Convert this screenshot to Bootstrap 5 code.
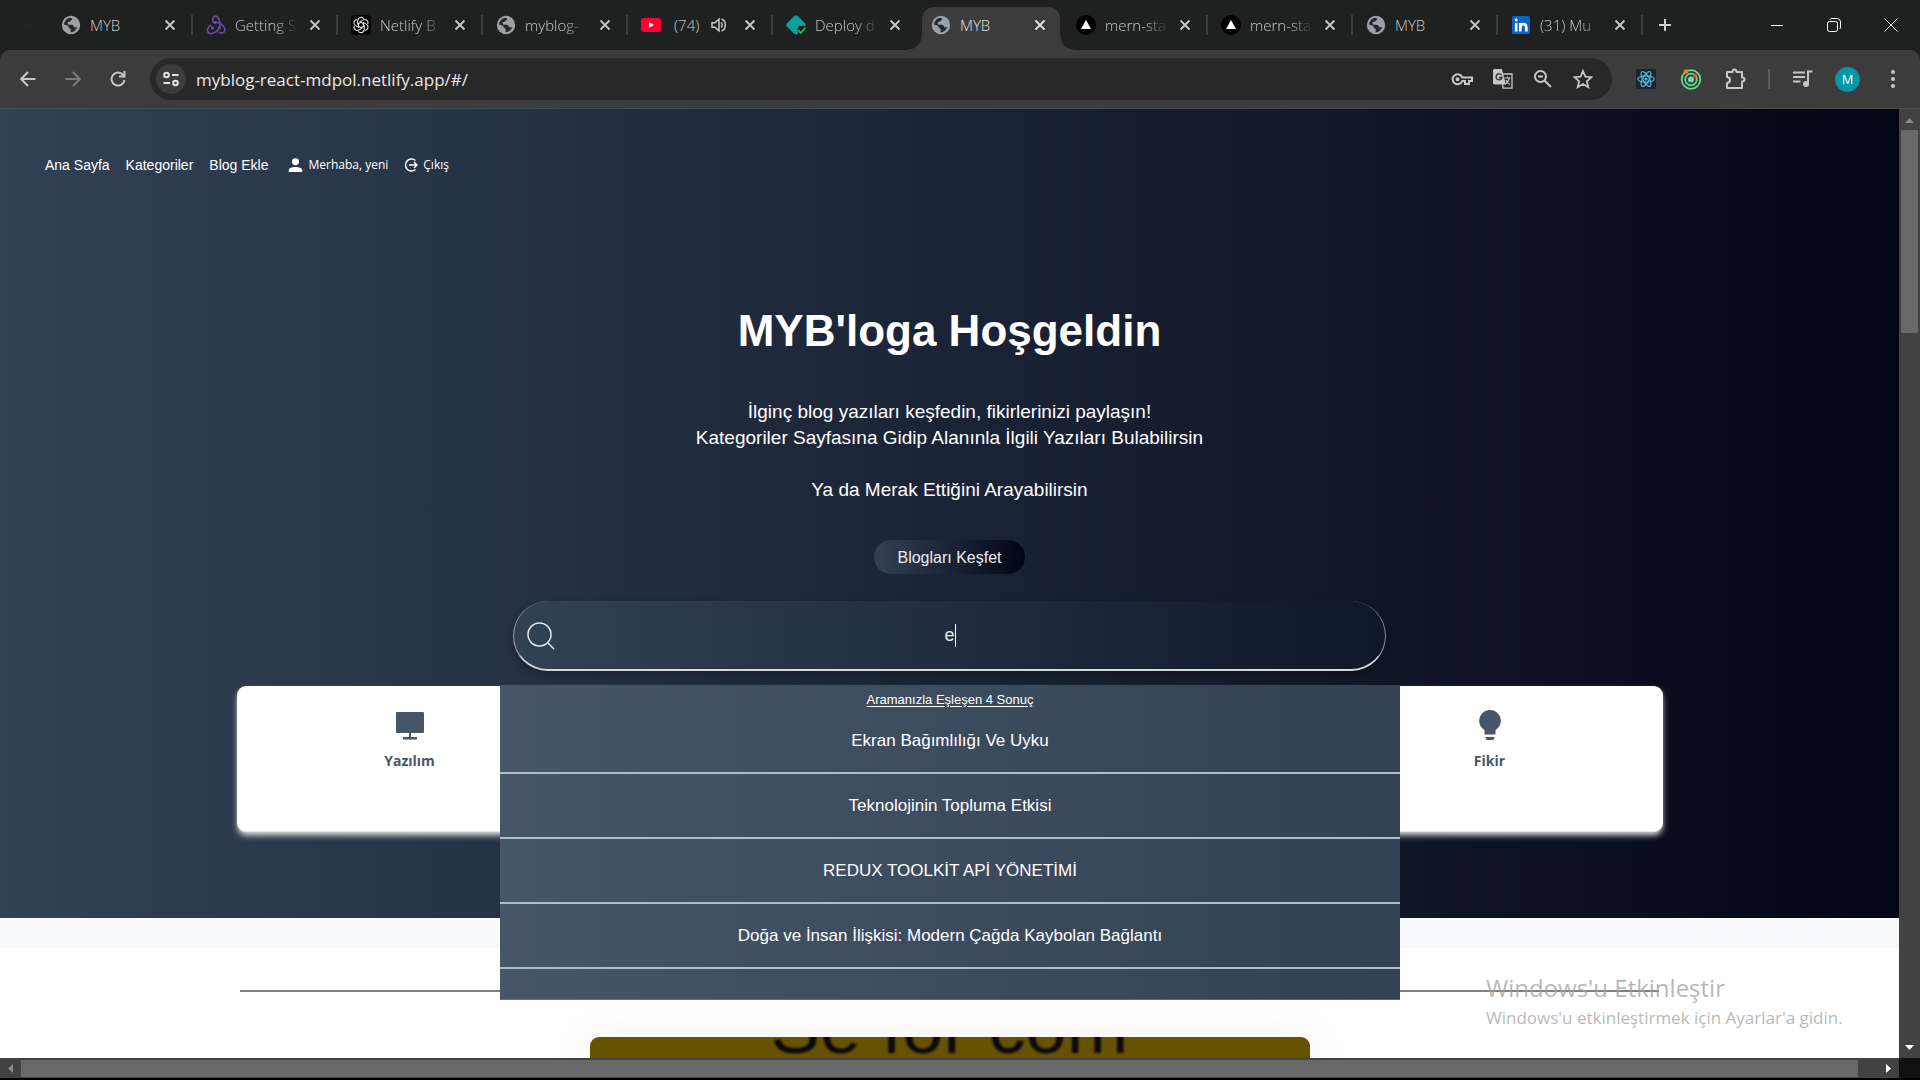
<!DOCTYPE html>
<html lang="tr">
<head>
<meta charset="utf-8">
<meta name="viewport" content="width=device-width, initial-scale=1">
<title>MYB</title>
<link href="https://cdn.jsdelivr.net/npm/bootstrap@5.3.0/dist/css/bootstrap.min.css" rel="stylesheet">
<style>
  body { font-family: "Liberation Sans", Arial, sans-serif; background: #000; }
  button { font-family: inherit; }
  .ui-font { font-family: "Open Sans", "Noto Sans", sans-serif; font-weight: 300; }
  svg { display: block; flex: none; }

  /* tab strip */
  .tab-strip { background: #1f2120; height: 50px; padding: 0 1px 0 8px; }
  .tab-search { width: 35px; height: 34px; border-radius: 12px; background: #3c3c3c; color: #e3e3e3; margin-right: 5px; }
  .plain-btn { background: none; border: 0; padding: 0; color: inherit; }
  .browser-tab { width: 145px; height: 43px; padding: 0 17px 0 13px; color: #c7c9c8; font-size: 15px; gap: 9px; }
  .browser-tab::after { content: ""; position: absolute; right: 0; top: 8px; width: 2px; height: 20px; background: #3c3e3d; }
  .browser-tab.no-line::after { display: none; }
  .browser-tab .tab-title { flex: 1 1 0; overflow: hidden; white-space: nowrap; color: inherit; text-decoration: none; line-height: 24px;
    -webkit-mask-image: linear-gradient(90deg, #000 62%, transparent 98%); mask-image: linear-gradient(90deg, #000 62%, transparent 98%); }
  .browser-tab .tab-title.whole { -webkit-mask-image: none; mask-image: none; }
  .browser-tab.current { color: #e3e3e3; }
  .tab-shape { position: absolute; left: 4px; right: 3px; top: 0; bottom: 0; background: #3c3c3c; border-radius: 12px 12px 0 0; }
  .tab-shape::before, .tab-shape::after { content: ""; position: absolute; bottom: 0; width: 14px; height: 14px; }
  .tab-shape::before { right: 100%; background: radial-gradient(circle at 0 0, transparent 13px, #3c3c3c 14px); }
  .tab-shape::after { left: 100%; background: radial-gradient(circle at 100% 0, transparent 13px, #3c3c3c 14px); }
  .window-btn { width: 57px; height: 50px; color: #fff; }

  /* toolbar */
  .tool-wrap { background: #1f2120; }
  .tool-bar { background: #3c3c3c; height: 59px; border-bottom: 1px solid #4a4b45; border-radius: 10px 10px 0 0; padding: 0 5px; color: #c7c7c7; }
  .tool-btn { width: 45px; height: 42px; }
  .address { background: #282828; height: 42px; border-radius: 21px; margin: 0 11px 0 10px; padding: 0 19px 0 6px; gap: 20px; }
  .site-info { width: 30px; height: 30px; border-radius: 50%; background: #3c3c3c; margin-right: -10px; }
  .address input { background: none; border: 0; outline: 0; color: #e8e8e8; font-size: 17px; padding: 2px 0 0; min-width: 0; }
  .tool-line { width: 2px; height: 20px; background: #5a5a5a; margin: 0 10px; }
  .avatar { width: 25px; height: 25px; border-radius: 50%; background: #0097a7; color: #fff; font-size: 13px; line-height: 25px; font-weight: 400; }

  /* page */
  .page-view { min-height: 0; background: #fff; }
  .hero { background: linear-gradient(90deg, #334155, #020617); color: #fff; padding: 46px 45px 86px; }
  .site-nav { gap: 16px; font-size: 14px; line-height: 20px; }
  .site-nav a, .site-nav .greeting { color: #fff; text-decoration: none; }
  .site-nav .account { font-family: "Open Sans", "Noto Sans", sans-serif; font-size: 12px; gap: 5px; }
  .hero-title { font-size: 44px; line-height: 50px; margin-top: 131px; }
  .hero-text { font-size: 19px; line-height: 26px; margin-top: 43px; }
  .explore { margin-top: 37px; height: 34px; width: 151px; border: 0; border-radius: 17px; padding: 1px 0 0; color: #e8ecf2; font-size: 16px; background: linear-gradient(90deg, #334155, #020617); }
  .search-area { max-width: 873px; margin-top: 27px; }
  .search-field { height: 70px; border: 1px solid #e5e7eb; border-width: 0 1px 2px; border-radius: 35px; background: linear-gradient(90deg, #334155, #0f172a) border-box; box-shadow: 0 4px 8px rgba(0,0,0,.25); color: #e5e7eb; font-size: 18px; outline: 0; border-color: rgba(229,231,235,.55) rgba(229,231,235,.55) #d5d9df; }
  .search-box { position: relative; }
  .search-box svg { position: absolute; left: 14px; top: 21px; }
  .text-cursor { position: absolute; left: calc(50% + 5px); top: 23px; width: 1px; height: 23px; background: #fff; }
  .results { position: absolute; top: 84px; left: -13px; right: -14px; height: 315px; z-index: 5; background: linear-gradient(90deg, #475569, #334155); border: 1px solid rgba(160,170,190,.35); border-width: 0 0 1px; }
  .results .found { font-size: 13px; line-height: 20px; padding-top: 5px; text-decoration: underline; text-underline-offset: 2px; }
  .results a { display: block; color: #fff; text-decoration: none; font-size: 17px; line-height: 27px; padding: 18px 0; border-bottom: 2px solid #b4bbc6; }
  .results a.first-hit { padding-top: 17px; }
  .topics { max-width: 1426px; height: 146px; margin-top: 15px; border-radius: 9px; background: #fff; box-shadow: 0 4px 6px -1px rgba(255,255,255,.9); border-bottom: 1px solid #e5e7eb; padding: 22px 108px; color: #475569; }
  .topic { width: 130px; font-family: "Open Sans", "Noto Sans", sans-serif; font-size: 14px; line-height: 20px; font-weight: 700; gap: 9px; }
  .topic a { color: inherit; text-decoration: none; }
  .band { height: 30px; background: #f8fafc; }
  .divider { width: 1419px; max-width: 75%; height: 2px; background: #808080; opacity: 1; border: 0; margin: 42px auto 45px; }
  .post { width: 720px; height: 400px; border-radius: 9px; background: #665200; overflow: hidden; box-shadow: 0 0 40px 5px rgba(0,0,0,.05); }
  .post-cover { color: #0c0812; font-size: 74px; line-height: 74px; margin-top: -46px; filter: blur(1px); }

  .watermark { position: absolute; left: 1486px; bottom: 49px; color: rgba(160,160,160,.75); z-index: 6; font-weight: 400; }
  .watermark .big-line { font-size: 24px; line-height: 34px; }
  .watermark .small-line { font-size: 17px; line-height: 26px; }

  /* scrollbars */
  .v-bar { width: 21px; background: #424242; padding: 9px 3px 8px 2px; }
  .v-thumb { width: 17px; height: 203px; background: #686868; margin-top: 7px; }
  .h-bar { height: 20px; background: #424242; margin-bottom: 2px; }
  .h-thumb { height: 17px; background: #686868; margin-right: 20px; }
  .bar-corner { width: 21px; height: 20px; background: #111; }
</style>
</head>
<body class="vh-100 d-flex flex-column overflow-hidden">

<svg width="0" height="0" class="position-absolute" aria-hidden="true">
  <defs>
    <symbol id="i-globe" viewBox="0 0 20 20"><circle cx="10" cy="10" r="9.200" fill="#9aa0a6"/><path d="M3 9.500C3.500 6 6 3.200 9.500 2.800L11.500 4 9 6.500 6.500 7.200 7 9.500l5 .5 1.500 2.500 2.800-.5C15 15.500 12.500 17.200 9.500 17.200L9.800 14 7.500 12.500 7.200 10.800z" fill="#25282a"/></symbol>
    <symbol id="i-x" viewBox="0 0 12 12"><path d="M1.500 1.500l9 9M10.500 1.500l-9 9" stroke="currentColor" stroke-width="1.800" fill="none"/></symbol>
    <symbol id="i-vercel" viewBox="0 0 20 20"><circle cx="10" cy="10" r="10" fill="#000"/><path d="M10 5l5 9H5z" fill="#fff"/></symbol>
  </defs>
</svg>

<header class="ui-font">
  <div class="tab-strip d-flex align-items-start">
    <button class="plain-btn tab-search d-flex align-items-center justify-content-center mt-2" aria-label="Sekme ara"><svg width="12" height="8" viewBox="0 0 12 8"><path d="M1.500 1.500L6 6l4.500-4.500" stroke="currentColor" stroke-width="2" fill="none"/></svg></button>
    <nav class="d-flex mt-auto" aria-label="Sekmeler">
      <div class="browser-tab position-relative d-flex align-items-center pb-2"><svg width="20" height="20"><use href="#i-globe"/></svg><a href="#" class="tab-title whole">MYB</a><button class="plain-btn" aria-label="Kapat"><svg width="12" height="12"><use href="#i-x"/></svg></button></div>
      <div class="browser-tab position-relative d-flex align-items-center pb-2"><svg width="20" height="20" viewBox="0 0 20 20" fill="none" stroke="#6b45ab" stroke-width="1.700"><path d="M13.500 12.500c1.500-4-.5-11-3.800-11.300C7 1 5.500 4 7.500 7.500"/><path d="M13 13.500c-2.500 4-7.500 6-10 4.500s-1.700-6 2-8"/><path d="M9 7.500c5-.5 10.500 4 9.800 7.800-.5 2.700-4 3.200-6.300 2"/><circle cx="9" cy="7.500" r=".8"/><circle cx="13.300" cy="13" r=".8"/><circle cx="6.500" cy="13" r=".8"/></svg><a href="#" class="tab-title">Getting S</a><button class="plain-btn" aria-label="Kapat"><svg width="12" height="12"><use href="#i-x"/></svg></button></div>
      <div class="browser-tab position-relative d-flex align-items-center pb-2"><svg width="20" height="20" viewBox="0 0 20 20"><rect width="20" height="20" rx="4" fill="#060606"/><g fill="none" stroke="#e8e8e8" stroke-width="1.100"><path id="petal" d="M10 7.200L6.700 9V5.500a3.300 3.300 0 0 1 6-1.700"/><use href="#petal" transform="rotate(60 10 10)"/><use href="#petal" transform="rotate(120 10 10)"/><use href="#petal" transform="rotate(180 10 10)"/><use href="#petal" transform="rotate(240 10 10)"/><use href="#petal" transform="rotate(300 10 10)"/></g></svg><a href="#" class="tab-title">Netlify B</a><button class="plain-btn" aria-label="Kapat"><svg width="12" height="12"><use href="#i-x"/></svg></button></div>
      <div class="browser-tab position-relative d-flex align-items-center pb-2"><svg width="20" height="20"><use href="#i-globe"/></svg><a href="#" class="tab-title">myblog-</a><button class="plain-btn" aria-label="Kapat"><svg width="12" height="12"><use href="#i-x"/></svg></button></div>
      <div class="browser-tab position-relative d-flex align-items-center pb-2"><svg width="20" height="20" viewBox="0 0 20 20"><rect y="3" width="20" height="14" rx="3" fill="#ff0033"/><path d="M8 7.200l5 2.800-5 2.800z" fill="#fff"/></svg><a href="#" class="tab-title whole ps-1">(74)</a><svg width="16" height="16" viewBox="0 0 16 16" fill="none" stroke="#c7c9c8" stroke-width="1.500" class="me-2"><path d="M1 5.800h3l4-3.600v11.600l-4-3.600H1zM10 5.500c1.500 1 1.500 4 0 5M10.500 2c5 1.500 5 10.500 0 12"/></svg><button class="plain-btn" aria-label="Kapat"><svg width="12" height="12"><use href="#i-x"/></svg></button></div>
      <div class="browser-tab no-line position-relative d-flex align-items-center pb-2"><svg width="20" height="20" viewBox="0 0 20 20"><path d="M8.500.8q1.500-1.300 3 0l7.700 7.700q.8 1.500 0 2.500l-6 0-2 3 1 4.500-1.500.8q-1.500.5-2.700-.8L.8 11.500q-1.200-1.500 0-3z" fill="#05a3a0"/><path d="M12 15l2.800 3 4.700-5.500" stroke="#2db84d" stroke-width="1.800" fill="none"/></svg><a href="#" class="tab-title">Deploy d</a><button class="plain-btn" aria-label="Kapat"><svg width="12" height="12"><use href="#i-x"/></svg></button></div>
      <div class="browser-tab current no-line position-relative d-flex align-items-center pb-2"><span class="tab-shape"></span><svg class="position-relative" width="20" height="20"><use href="#i-globe"/></svg><a href="#" class="tab-title whole position-relative">MYB</a><button class="plain-btn position-relative" aria-label="Kapat"><svg width="12" height="12"><use href="#i-x"/></svg></button></div>
      <div class="browser-tab position-relative d-flex align-items-center pb-2"><svg width="20" height="20"><use href="#i-vercel"/></svg><a href="#" class="tab-title">mern-sta</a><button class="plain-btn" aria-label="Kapat"><svg width="12" height="12"><use href="#i-x"/></svg></button></div>
      <div class="browser-tab position-relative d-flex align-items-center pb-2"><svg width="20" height="20"><use href="#i-vercel"/></svg><a href="#" class="tab-title">mern-sta</a><button class="plain-btn" aria-label="Kapat"><svg width="12" height="12"><use href="#i-x"/></svg></button></div>
      <div class="browser-tab position-relative d-flex align-items-center pb-2"><svg width="20" height="20"><use href="#i-globe"/></svg><a href="#" class="tab-title whole">MYB</a><button class="plain-btn" aria-label="Kapat"><svg width="12" height="12"><use href="#i-x"/></svg></button></div>
      <div class="browser-tab position-relative d-flex align-items-center pb-2"><svg width="20" height="20" viewBox="0 0 20 20"><rect x="1" y="1" width="18" height="18" rx="1.500" fill="#0a66c2"/><g stroke="#fff" stroke-width="2.600" fill="none"><path d="M5.200 8v8.500M9.300 8v8.500M9.300 12.500c0-4.500 6-4.500 6 0v4"/></g><circle cx="5.200" cy="5" r="1.500" fill="#fff"/></svg><a href="#" class="tab-title">(31) Mu</a><button class="plain-btn" aria-label="Kapat"><svg width="12" height="12"><use href="#i-x"/></svg></button></div>
    </nav>
    <button class="plain-btn ms-3 align-self-center text-light" aria-label="Yeni sekme"><svg width="12" height="12" viewBox="0 0 12 12"><path d="M6 0v12M0 6h12" stroke="#d0d2d1" stroke-width="2"/></svg></button>
    <div class="d-flex ms-auto">
      <button class="plain-btn window-btn d-flex align-items-center justify-content-center" aria-label="Küçült"><svg width="14" height="14" viewBox="0 0 14 14"><path d="M1 7.500h12" stroke="currentColor"/></svg></button>
      <button class="plain-btn window-btn d-flex align-items-center justify-content-center" aria-label="Geri yükle"><svg width="14" height="14" viewBox="0 0 14 14" fill="none" stroke="currentColor"><rect x=".5" y="3.500" width="10" height="10" rx="2"/><path d="M3 1.500q.5-1 2-1h5q3.500 0 3.500 3.500v5q0 1.500-1 2"/></svg></button>
      <button class="plain-btn window-btn d-flex align-items-center justify-content-center" aria-label="Kapat"><svg width="14" height="14" viewBox="0 0 14 14"><path d="M.5.5l13 13M13.500.5l-13 13" stroke="currentColor"/></svg></button>
    </div>
  </div>
  <div class="tool-wrap">
  <div class="tool-bar d-flex align-items-center">
    <button class="plain-btn tool-btn d-flex align-items-center justify-content-center" aria-label="Geri"><svg width="16" height="16" viewBox="0 0 16 16" fill="none" stroke="#c7c7c7" stroke-width="2"><path d="M15.500 8H1.500M8 1L1.200 8 8 15"/></svg></button>
    <button class="plain-btn tool-btn d-flex align-items-center justify-content-center" aria-label="İleri"><svg width="16" height="16" viewBox="0 0 16 16" fill="none" stroke="#7c7c7c" stroke-width="2"><path d="M.5 8h14M8 1l6.800 7L8 15"/></svg></button>
    <button class="plain-btn tool-btn d-flex align-items-center justify-content-center" aria-label="Yenile"><svg width="16" height="16" viewBox="0 0 16 16" fill="none" stroke="#c7c7c7" stroke-width="2"><path d="M13.500 4.500A6.500 6.500 0 1 0 14.500 9M14.500 0v5.500H9"/></svg></button>
    <div class="address d-flex align-items-center flex-fill">
      <button class="plain-btn site-info d-flex align-items-center justify-content-center" aria-label="Site bilgileri"><svg width="16" height="16" viewBox="0 0 16 16" fill="none" stroke="#e3e3e3" stroke-width="2"><circle cx="3.500" cy="4" r="2.300"/><path d="M9 4h6.500M.5 12H7"/><circle cx="12.500" cy="12" r="2.300"/></svg></button>
      <input class="flex-fill" type="text" value="myblog-react-mdpol.netlify.app/#/" aria-label="Adres">
      <button class="plain-btn" aria-label="Şifreler"><svg width="22" height="20" viewBox="0 0 22 20" fill="none" stroke="#c7c7c7" stroke-width="2"><path d="M11.300 8.500a5 5 0 1 0 0 3.500H14v3h4v-3h3V8.500z"/><circle cx="6.500" cy="10.200" r="1" /></svg></button>
      <button class="plain-btn" aria-label="Çevir"><svg width="20" height="20" viewBox="0 0 20 20"><path d="M9 5h10v14.200h-9z" fill="#282828" stroke="#c7c7c7" stroke-width="1.300"/><path d="M1.500 0h7.300L13 15.500H1.500Q0 15.500 0 14V1.500Q0 0 1.500 0z" fill="#c7c7c7"/><path d="M8.600 6.200A3 3 0 1 0 9 8.500H6" fill="none" stroke="#282828" stroke-width="1.300"/><path d="M11.500 9h6M14.500 7.500V9M16.500 9q-1 4-4 6M13 11q1.500 3 4 4.500" fill="none" stroke="#c7c7c7" stroke-width="1.200"/></svg></button>
      <button class="plain-btn" aria-label="Yakınlaştırma"><svg width="20" height="20" viewBox="0 0 20 20" fill="none" stroke="#c7c7c7" stroke-width="2"><circle cx="7.500" cy="7.500" r="5.500"/><path d="M11.500 11.500l6.500 6.500M5 7.500h5"/></svg></button>
      <button class="plain-btn" aria-label="Yer işareti"><svg width="20" height="20" viewBox="0 0 20 20" fill="none" stroke="#c7c7c7" stroke-width="1.800"><path d="M10 2l2.400 5.700 6.100.5-4.600 4 1.400 6L10 15l-5.300 3.200 1.400-6-4.600-4 6.100-.5z"/></svg></button>
    </div>
    <button class="plain-btn tool-btn d-flex align-items-center justify-content-center" aria-label="React"><svg width="20" height="20" viewBox="0 0 20 20"><rect width="20" height="20" rx="2" fill="#20232a"/><g fill="none" stroke="#4fb8dc" stroke-width="1.200"><ellipse cx="10" cy="10" rx="8.300" ry="3.200"/><ellipse cx="10" cy="10" rx="8.300" ry="3.200" transform="rotate(60 10 10)"/><ellipse cx="10" cy="10" rx="8.300" ry="3.200" transform="rotate(120 10 10)"/></g><circle cx="10" cy="10" r="1.600" fill="#4fb8dc"/></svg></button>
    <button class="plain-btn tool-btn d-flex align-items-center justify-content-center" aria-label="Uzantı"><svg width="22" height="22" viewBox="0 0 22 22" fill="none" stroke="#5fe08c" stroke-width="1.700"><circle cx="11" cy="11.500" r="9.300"/><circle cx="11" cy="11.500" r="5.800"/><circle cx="11" cy="11.500" r="3" fill="#5fe0b0" stroke="none"/><circle cx="6" cy="3.500" r="2.300" fill="#ff7a1a" stroke="none"/><circle cx="15" cy="7.500" r="2" fill="#ff4d2e" stroke="none"/></svg></button>
    <button class="plain-btn tool-btn d-flex align-items-center justify-content-center" aria-label="Uzantılar"><svg width="22" height="22" viewBox="0 0 22 22" fill="none" stroke="#c7c7c7" stroke-width="2"><path d="M2 4h5.500q0-2.500 2-2.500t2 2.500H17v5.500q2.500 0 2.500 2t-2.500 2V20H2v-5q3-.5 3-3T2 9z" stroke-linejoin="round"/></svg></button>
    <span class="tool-line"></span>
    <button class="plain-btn tool-btn d-flex align-items-center justify-content-center" aria-label="Medya"><svg width="20" height="18" viewBox="0 0 20 18"><path d="M0 2.500h12M0 7h12M0 11.500h7.500M15 14V1.500h4.500" fill="none" stroke="#c7c7c7" stroke-width="2"/><circle cx="13" cy="14" r="3" fill="#c7c7c7"/></svg></button>
    <button class="plain-btn tool-btn d-flex align-items-center justify-content-center" aria-label="Profil"><span class="avatar">M</span></button>
    <button class="plain-btn tool-btn d-flex align-items-center justify-content-center" aria-label="Menü"><svg width="4" height="20" viewBox="0 0 4 20" fill="#c7c7c7"><circle cx="2" cy="3" r="2"/><circle cx="2" cy="10" r="2"/><circle cx="2" cy="17" r="2"/></svg></button>
  </div>
  </div>
</header>

<div class="d-flex flex-fill page-view overflow-hidden">
  <main class="flex-fill overflow-hidden">
    <section class="hero">
      <nav class="site-nav d-flex align-items-center">
        <a href="#">Ana Sayfa</a>
        <a href="#">Kategoriler</a>
        <a href="#">Blog Ekle</a>
        <span class="account greeting d-flex align-items-center ms-1"><svg width="15" height="15" viewBox="0 0 16 16" fill="#fff"><circle cx="8" cy="4" r="3.700"/><path d="M.8 15v-2C.8 8.500 15.200 8.500 15.200 13v2z"/></svg>Merhaba, yeni</span>
        <a href="#" class="account d-flex align-items-center"><svg width="14" height="16" viewBox="0 0 14 16" fill="none" stroke="#fff" stroke-width="1.500"><path d="M11.500 3.500a6 6 0 1 0 0 9M5 8h8M10 5l3 3-3 3"/></svg>Çıkış</a>
      </nav>
      <div class="text-center">
        <h1 class="hero-title fw-bold mb-0">MYB'loga Hoşgeldin</h1>
        <p class="hero-text mb-0">İlginç blog yazıları keşfedin, fikirlerinizi paylaşın!<br>Kategoriler Sayfasına Gidip Alanınla İlgili Yazıları Bulabilirsin<br><br>Ya da Merak Ettiğini Arayabilirsin</p>
        <button class="explore d-block mx-auto">Blogları Keşfet</button>
        <div class="search-area mx-auto search-box">
          <input class="search-field w-100 text-center d-block" type="text" value="e" aria-label="Blog ara">
          <span class="text-cursor"></span>
          <svg width="28" height="28" viewBox="0 0 28 28" fill="none" stroke="#e5e7eb" stroke-width="1.500"><circle cx="12.500" cy="12.500" r="11.500"/><path d="M20.500 20.500l6.500 6.500"/></svg>
          <div class="results">
            <div class="found">Aramanızla Eşleşen 4 Sonuç</div>
            <a href="#" class="first-hit">Ekran Bağımlılığı Ve Uyku</a>
            <a href="#">Teknolojinin Topluma Etkisi</a>
            <a href="#">REDUX TOOLKİT APİ YÖNETİMİ</a>
            <a href="#">Doğa ve İnsan İlişkisi: Modern Çağda Kaybolan Bağlantı</a>
          </div>
        </div>
      </div>
      <div class="topics mx-auto d-flex justify-content-between align-items-start text-center">
        <div class="topic d-flex flex-column align-items-center"><svg width="32" height="34" viewBox="0 0 32 34" fill="#475569"><path d="M3 4h26q1 0 1 1v19q0 1-1 1H17v4h6v2.500H9V29h6v-4H3q-1 0-1-1V5q0-1 1-1z"/></svg><a href="#">Yazılım</a></div>
        <div class="topic d-flex flex-column align-items-center"><svg width="32" height="34" viewBox="0 0 32 34" fill="#475569"><path d="M16 2a10.800 10.800 0 0 1 10.800 10.800c0 4-2.300 7.500-5.300 9.200v4.500h-11V22c-3-1.700-5.300-5.200-5.300-9.200A10.800 10.800 0 0 1 16 2zM11.500 29h9l-1 3h-7z"/></svg><a href="#">Fikir</a></div>
      </div>
    </section>
    <div class="band"></div>
    <hr class="divider">
    <article class="post mx-auto text-center"><div class="post-cover">Se for com</div></article>
  </main>
  <div class="v-bar d-flex flex-column align-items-center">
    <svg width="9" height="5" viewBox="0 0 9 5"><path d="M4.500 0L9 5H0z" fill="#8a8a8a"/></svg>
    <div class="v-thumb"></div>
    <svg class="mt-auto" width="9" height="5" viewBox="0 0 9 5"><path d="M4.500 5L9 0H0z" fill="#fff"/></svg>
  </div>
</div>
<footer class="d-flex">
  <div class="h-bar d-flex align-items-center flex-fill px-2 gap-2">
    <svg width="5" height="9" viewBox="0 0 5 9"><path d="M0 4.500L5 0v9z" fill="#8a8a8a"/></svg>
    <div class="h-thumb flex-fill"></div>
    <svg width="5" height="9" viewBox="0 0 5 9"><path d="M5 4.500L0 0v9z" fill="#fff"/></svg>
  </div>
  <div class="bar-corner"></div>
</footer>
<aside class="watermark ui-font"><div class="big-line">Windows'u Etkinleştir</div><div class="small-line">Windows'u etkinleştirmek için Ayarlar'a gidin.</div></aside>
<script src="https://cdn.jsdelivr.net/npm/bootstrap@5.3.0/dist/js/bootstrap.bundle.min.js"></script>
</body>
</html>
